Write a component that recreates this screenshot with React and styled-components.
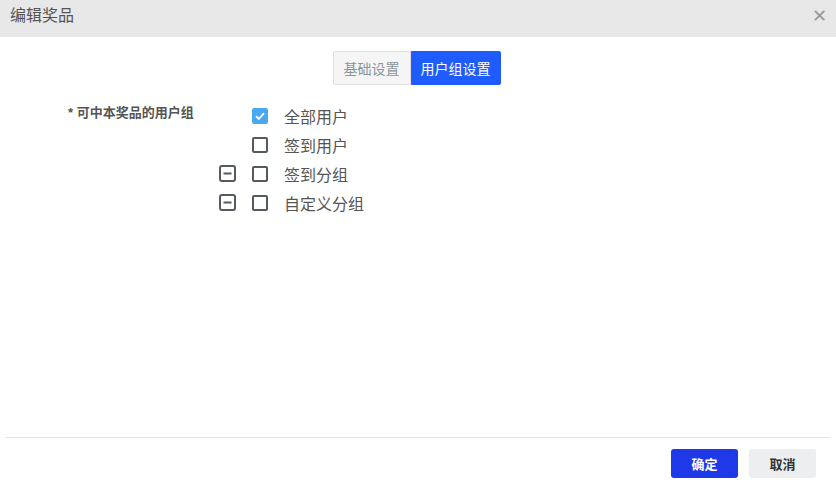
import React, { useState } from "react";
import styled, { createGlobalStyle } from "styled-components";

const GlobalStyle = createGlobalStyle`
    html, body {
        margin: 0;
        padding: 0;
        background: #fff;
        font-family: "Liberation Sans", "Noto Sans CJK SC", sans-serif;
    }
`;

const Dialog = styled.div`
    width: 836px;
    height: 484px;
    display: flex;
    flex-direction: column;
    background: #fff;
`;

const Header = styled.div`
    height: 37px;
    flex-shrink: 0;
    background: #e8e8e8;
    display: flex;
    align-items: center;
    justify-content: space-between;
    padding: 0 9px 0 10px;
    box-sizing: border-box;
`;

const Title = styled.span`
    font-size: 16px;
    color: #555;
    margin-top: -10px;
`;

const Close = styled.span`
    font-size: 18px;
    color: #999;
    margin-top: -5px;
    line-height: 1;
`;

const Body = styled.div`
    flex: 1;
    display: flex;
    flex-direction: column;
    padding-top: 14px;
`;

const Tabs = styled.div`
    display: flex;
    justify-content: center;
    padding-right: 3px;
`;

const Tab = styled.div`
    height: 34px;
    box-sizing: border-box;
    padding: 0 ${(p) => (p.active ? "9px" : "10px")};
    display: flex;
    align-items: center;
    font-size: 14px;
    color: ${(p) => (p.active ? "#fff" : "#8a949c")};
    background: ${(p) => (p.active ? "#1e5cff" : "#f5f5f5")};
    border: 1px solid ${(p) => (p.active ? "#1e5cff" : "#e2dede")};
    border-radius: ${(p) => (p.active ? "0 2px 2px 0" : "2px 0 0 2px")};
`;

const FormRow = styled.div`
    display: flex;
    margin-top: 16px;
    padding-left: 68px;
`;

const Label = styled.div`
    width: 152px;
    font-size: 13px;
    font-weight: bold;
    color: #555;
    padding-top: 1px;
`;

const Options = styled.div`
    display: flex;
    flex-direction: column;
`;

const Option = styled.div`
    height: 29px;
    display: flex;
    align-items: center;
    gap: 16px;
`;

const Expander = styled.span`
    width: 17px;
    height: 17px;
    display: flex;
    visibility: ${(p) => (p.show ? "visible" : "hidden")};
    margin-left: -1px;
`;

const Box = styled.span`
    width: 16px;
    height: 16px;
    box-sizing: border-box;
    border-radius: 2px;
    border: 2px solid ${(p) => (p.checked ? "#4aa8f0" : "#555a60")};
    background: ${(p) => (p.checked ? "#4aa8f0" : "#fff")};
    display: flex;
    align-items: center;
    justify-content: center;
`;

const OptionText = styled.span`
    font-size: 16px;
    color: #555;
`;

const Footer = styled.div`
    flex-shrink: 0;
    box-sizing: border-box;
    margin: 0 6px 0 5px;
    border-top: 1px solid #e4e4e4;
    height: 47px;
    display: flex;
    justify-content: flex-end;
    align-items: flex-start;
    gap: 11px;
    padding: 11px 14px 0 0;
`;

const FootButton = styled.button`
    width: 67px;
    height: 29px;
    border: none;
    border-radius: 3px;
    font-family: inherit;
    font-size: 13px;
    font-weight: bold;
    color: ${(p) => (p.primary ? "#fff" : "#333")};
    background: ${(p) => (p.primary ? "#2039e8" : "#eceeef")};
    cursor: pointer;
`;

const MinusSquare = () => (
    <svg width="17" height="17" viewBox="0 0 17 17">
        <rect x="1" y="1" width="15" height="15" rx="2" fill="none" stroke="#555a60" strokeWidth="2" />
        <rect x="4.5" y="7.5" width="8" height="2" fill="#555a60" />
    </svg>
);

const Check = () => (
    <svg width="12" height="12" viewBox="0 0 12 12">
        <path d="M2 6.2 L4.8 9 L10 3.2" fill="none" stroke="#fff" strokeWidth="1.8" />
    </svg>
);

const groups = [
    { name: "全部用户", checked: true, expand: false },
    { name: "签到用户", checked: false, expand: false },
    { name: "签到分组", checked: false, expand: true },
    { name: "自定义分组", checked: false, expand: true },
];

function App() {
    const [tab, setTab] = useState(1);

    return (
        <Dialog>
            <GlobalStyle />
            <Header>
                <Title>编辑奖品</Title>
                <Close>✕</Close>
            </Header>
            <Body>
                <Tabs>
                    <Tab active={tab === 0} onClick={() => setTab(0)}>基础设置</Tab>
                    <Tab active={tab === 1} onClick={() => setTab(1)}>用户组设置</Tab>
                </Tabs>
                <FormRow>
                    <Label>* 可中本奖品的用户组</Label>
                    <Options>
                        {groups.map((g) => (
                            <Option key={g.name}>
                                <Expander show={g.expand}><MinusSquare /></Expander>
                                <Box checked={g.checked}>{g.checked && <Check />}</Box>
                                <OptionText>{g.name}</OptionText>
                            </Option>
                        ))}
                    </Options>
                </FormRow>
            </Body>
            <Footer>
                <FootButton primary>确定</FootButton>
                <FootButton>取消</FootButton>
            </Footer>
        </Dialog>
    );
}

export default App;
